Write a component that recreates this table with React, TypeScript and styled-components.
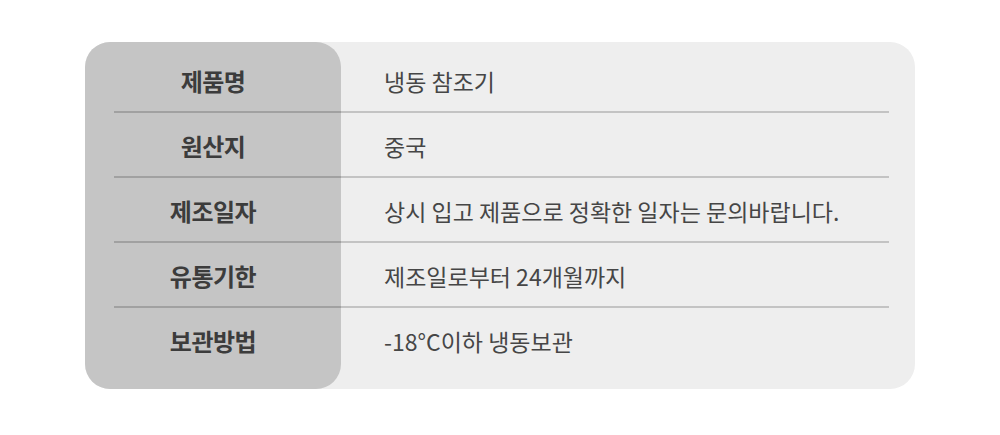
import React from 'react';
import styled, { createGlobalStyle } from 'styled-components';

const GlobalStyle = createGlobalStyle`
    html, body {
        margin: 0;
        padding: 0;
        background: #ffffff;
    }
    body {
        font-family: "Noto Sans CJK KR", "Noto Sans", sans-serif;
    }
`

const Page = styled.div`
    display: flex;
    justify-content: center;
    padding-top: 42px;
`

const Card = styled.div`
    display: grid;
    grid-template-columns: 256px 1fr;
    width: 830px;
    background-color: #eeeeee;
    border-radius: 25px;
`

const Shade = styled.div`
    grid-column: 1;
    grid-row: 1 / span 5;
    background-color: #c5c5c5;
    border-radius: 25px;
`

const Row = styled.div<{ $row: number; $top?: number; $bottom?: number; $line?: boolean }>`
    grid-column: 1 / -1;
    grid-row: ${p => p.$row};
    display: grid;
    grid-template-columns: 256px 1fr;
    align-items: center;
    height: 65px;
    padding-top: ${p => p.$top || 0}px;
    padding-bottom: ${p => p.$bottom || 0}px;
    position: relative;
    &::after {
        content: '';
        display: ${p => (p.$line ? 'block' : 'none')};
        position: absolute;
        left: 29px;
        right: 26px;
        bottom: 0;
        height: 2px;
        background-color: rgba(0, 0, 0, 0.18);
    }
`

const Label = styled.div`
    text-align: center;
    font-size: 24px;
    font-weight: 700;
    color: #3c3c3c;
    letter-spacing: -0.5px;
`

const Value = styled.div`
    padding-left: 43px;
    font-size: 23px;
    font-weight: 400;
    color: #464646;
    letter-spacing: 0;
`

const rows = [
    { label: '제품명', value: '냉동 참조기' },
    { label: '원산지', value: '중국' },
    { label: '제조일자', value: '상시 입고 제품으로 정확한 일자는 문의바랍니다.' },
    { label: '유통기한', value: '제조일로부터 24개월까지' },
    { label: '보관방법', value: '-18°C이하 냉동보관' },
]

function App() {
    return <Page>
        <GlobalStyle />
        <Card>
            <Shade />
            {rows.map((r, i) => (
                <Row
                    key={r.label}
                    $row={i + 1}
                    $top={i === 0 ? 6 : 0}
                    $bottom={i === rows.length - 1 ? 16 : 0}
                    $line={i < rows.length - 1}
                >
                    <Label>{r.label}</Label>
                    <Value>{r.value}</Value>
                </Row>
            ))}
        </Card>
    </Page>
}

export default App;
